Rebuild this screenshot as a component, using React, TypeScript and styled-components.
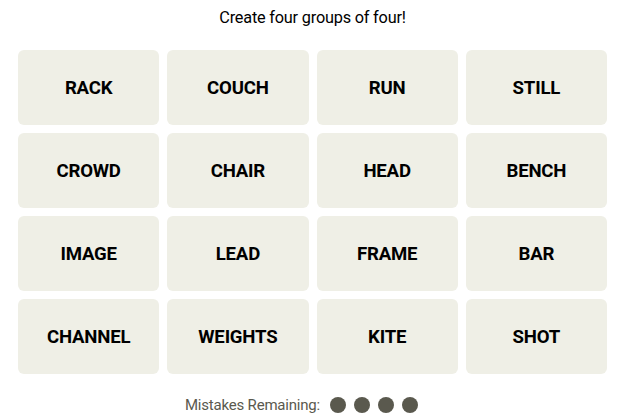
import React from 'react';
import styled, { createGlobalStyle } from 'styled-components';

const words = [
  'RACK', 'COUCH', 'RUN', 'STILL',
  'CROWD', 'CHAIR', 'HEAD', 'BENCH',
  'IMAGE', 'LEAD', 'FRAME', 'BAR',
  'CHANNEL', 'WEIGHTS', 'KITE', 'SHOT',
];

const GlobalStyle = createGlobalStyle`
  body {
    margin: 0;
    background: #fff;
    font-family: Roboto, "Liberation Sans", sans-serif;
    color: #000;
  }
`;

const Page = styled.div`
  width: 619px;
  display: flex;
  flex-direction: column;
  align-items: center;
  padding: 8px 12px 0 18px;
  box-sizing: border-box;
`;

const Title = styled.p`
  margin: 0;
  font-size: 16.3px;
  line-height: 20px;
  letter-spacing: -0.2px;
`;

const Board = styled.div`
  margin-top: 22px;
  width: 100%;
  display: grid;
  grid-template-columns: repeat(4, 1fr);
  grid-auto-rows: 75px;
  gap: 8px;
`;

const Tile = styled.div`
  display: flex;
  align-items: center;
  justify-content: center;
  background: #efefe6;
  border-radius: 6px;
  font-weight: 700;
  font-size: 18.6px;
  letter-spacing: -0.2px;
  text-transform: uppercase;
`;

const Mistakes = styled.div`
  margin: 22px 22px 0 0;
  display: flex;
  align-items: center;
  gap: 8px;
  font-size: 15px;
  color: #5a594e;
`;

const Label = styled.span`
  margin-right: 2px;
  letter-spacing: -0.2px;
`;

const Dot = styled.span`
  width: 16px;
  height: 16px;
  border-radius: 50%;
  background: #5a594e;
`;

export default function App() {
  return (
    <>
      <GlobalStyle />
      <Page>
        <Title>Create four groups of four!</Title>
        <Board>
          {words.map((w) => (
            <Tile key={w}>{w}</Tile>
          ))}
        </Board>
        <Mistakes>
          <Label>Mistakes Remaining:</Label>
          {[0, 1, 2, 3].map((i) => (
            <Dot key={i} />
          ))}
        </Mistakes>
      </Page>
    </>
  );
}
